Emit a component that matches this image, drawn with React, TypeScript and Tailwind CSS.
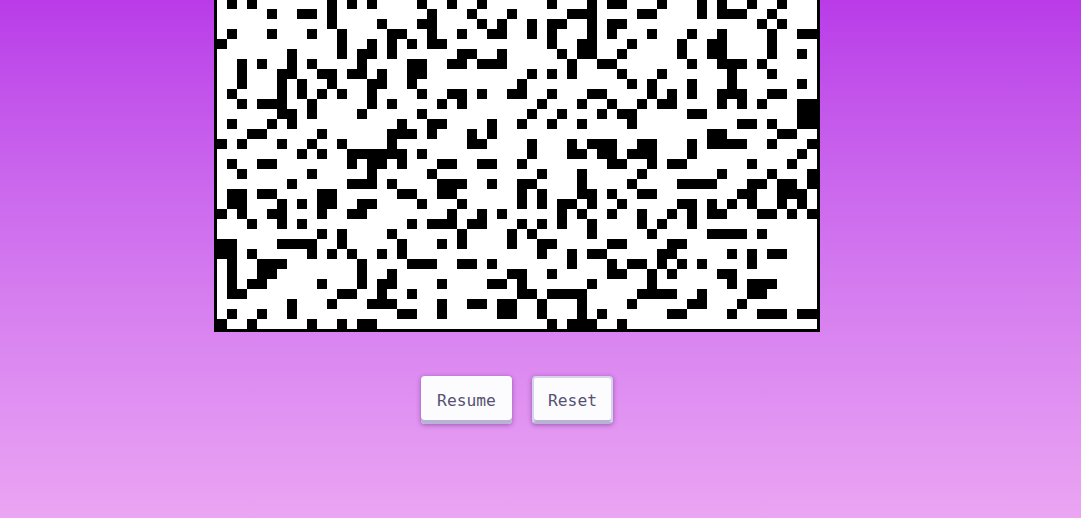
const rows: number[][] = [
  [1, 3, 11, 13, 15, 20, 23, 26, 33, 37, 39, 40, 44, 48, 50, 53, 56],
  [5, 8, 9, 11, 21, 25, 29, 35, 36, 37, 42, 43, 48, 50, 51, 52, 55],
  [11, 16, 20, 21, 26, 28, 31, 33, 34, 37, 39, 40, 54, 56],
  [1, 5, 9, 12, 17, 18, 21, 24, 27, 28, 31, 33, 37, 39, 43, 47, 50, 55, 58, 59],
  [0, 12, 15, 17, 19, 21, 22, 33, 36, 37, 41, 46, 49, 50, 55],
  [7, 12, 14, 15, 17, 24, 25, 28, 34, 36, 37, 40, 46, 49, 50, 55, 58],
  [2, 4, 7, 9, 14, 19, 20, 23, 24, 26, 27, 28, 35, 38, 39, 47, 50, 51, 52, 54],
  [2, 6, 7, 10, 11, 13, 14, 16, 19, 20, 31, 33, 35, 40, 44, 51, 55],
  [2, 6, 8, 11, 15, 16, 19, 30, 41, 43, 47, 51, 58],
  [1, 6, 8, 10, 12, 15, 20, 23, 24, 26, 29, 30, 33, 37, 38, 43, 45, 47, 50, 51, 52, 55, 56],
  [2, 4, 5, 6, 9, 15, 17, 22, 24, 32, 36, 39, 42, 44, 45, 50, 52, 54, 58, 59],
  [6, 7, 9, 14, 20, 31, 34, 38, 40, 41, 47, 48, 58, 59],
  [1, 5, 7, 18, 21, 22, 27, 30, 33, 36, 41, 52, 53, 55, 58, 59],
  [3, 4, 10, 17, 18, 19, 21, 25, 27, 49, 50, 56, 57],
  [0, 2, 6, 9, 12, 17, 25, 26, 31, 35, 37, 38, 39, 42, 43, 47, 49, 50, 51, 52, 55, 59],
  [8, 10, 13, 14, 15, 16, 17, 18, 20, 31, 35, 36, 38, 39, 41, 42, 43, 47, 58],
  [1, 4, 5, 13, 15, 16, 18, 22, 23, 26, 27, 30, 39, 40, 43, 45, 46, 53, 57],
  [2, 9, 15, 21, 32, 36, 42, 50, 55, 59],
  [7, 13, 14, 15, 17, 22, 23, 24, 27, 30, 31, 36, 41, 46, 47, 48, 49, 53, 54, 56, 57, 59],
  [1, 2, 4, 5, 10, 11, 18, 19, 22, 23, 30, 32, 36, 37, 39, 42, 43, 52, 53, 56, 57, 58],
  [1, 2, 6, 8, 10, 11, 14, 15, 20, 24, 30, 32, 34, 35, 37, 40, 46, 47, 49, 51, 53, 56, 58],
  [0, 2, 5, 6, 10, 13, 14, 23, 26, 28, 34, 36, 39, 42, 45, 47, 49, 50, 54, 55, 57, 59],
  [3, 6, 8, 19, 21, 22, 23, 25, 26, 30, 32, 34, 37, 42, 44, 47],
  [10, 12, 17, 24, 29, 31, 37, 43, 49, 50, 51, 52, 54],
  [0, 1, 6, 7, 8, 9, 12, 18, 22, 24, 29, 32, 33, 39, 40, 45, 46],
  [0, 1, 3, 9, 11, 13, 16, 18, 32, 35, 37, 38, 44, 45, 51, 53, 55, 56],
  [1, 4, 5, 6, 14, 19, 20, 21, 24, 25, 27, 35, 39, 41, 42, 44, 46, 48, 53],
  [1, 4, 5, 14, 17, 29, 30, 33, 39, 40, 43, 45, 50, 51],
  [1, 3, 4, 10, 14, 16, 17, 22, 27, 28, 30, 37, 43, 51, 53, 54, 55],
  [1, 2, 12, 13, 16, 19, 30, 31, 33, 34, 35, 36, 42, 43, 44, 45, 48, 53, 54],
  [7, 11, 15, 16, 17, 22, 25, 26, 28, 29, 32, 36, 41, 47, 48, 52],
  [1, 4, 7, 18, 19, 22, 28, 29, 32, 36, 38, 45, 46, 51, 54, 55, 56, 58, 59],
  [0, 3, 9, 12, 14, 15, 33, 35, 36, 37, 40],
];

function Board() {
  return (
    <div className="shrink-0 border-[3px] border-black bg-white">
      {rows.map((live, r) => (
        <div key={r} className="flex">
          {Array.from({ length: 60 }, (_, c) => (
            <div key={c} className={live.includes(c) ? "h-[10px] w-[10px] bg-black" : "h-[10px] w-[10px]"} />
          ))}
        </div>
      ))}
    </div>
  );
}

export default function App() {
  return (
    <div className="flex h-[518px] flex-col items-center justify-end overflow-hidden bg-gradient-to-b from-[#b93be8] to-[#eba5f3] pr-[47px] pb-[94px]">
      <Board />
      <div className="mt-[44px] flex gap-5 font-['DejaVu_Sans_Mono',monospace] text-[16.3px] leading-6 text-[#565272]">
        <button className="h-12 w-[91px] rounded-[4px] bg-[#fcfcfe] pt-px shadow-[inset_0_-4px_0_#b9b2d4,0_1px_5px_rgba(60,20,90,0.45)]">
          Resume
        </button>
        <button className="h-12 w-[81px] rounded-[4px] border-2 border-[#d6d3ea] border-b-[#b9b2d4] bg-[#fcfcfe] pt-px shadow-[inset_0_-2px_0_#b9b2d4,0_1px_5px_rgba(60,20,90,0.45)]">
          Reset
        </button>
      </div>
    </div>
  );
}
